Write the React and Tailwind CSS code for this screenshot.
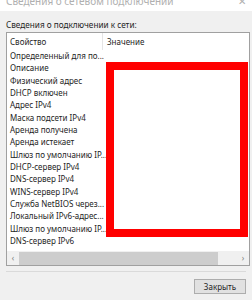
import React from 'react';

const rows = [
  'Определенный для по...',
  'Описание',
  'Физический адрес',
  'DHCP включен',
  'Адрес IPv4',
  'Маска подсети IPv4',
  'Аренда получена',
  'Аренда истекает',
  'Шлюз по умолчанию IP...',
  'DHCP-сервер IPv4',
  'DNS-сервер IPv4',
  'WINS-сервер IPv4',
  'Служба NetBIOS через...',
  'Локальный IPv6-адрес...',
  'Шлюз по умолчанию IP...',
  'DNS-сервер IPv6',
];

export default function App() {
  return (
    <div className="relative w-[252px] h-[300px] overflow-hidden bg-[#f0f0f0] text-[8px] text-[#1e1e1e] font-['Noto_Sans',sans-serif] flex flex-col">
      {/* title bar, cut at the top */}
      <div className="h-[11px] bg-white flex items-start justify-between px-[6px] text-[10px] text-[#b0b0b0] leading-[12px] overflow-hidden">
        <span className="-mt-[5px]">Сведения о сетевом подключении</span>
        <span className="-mt-[5px]">✕</span>
      </div>

      <div className="px-[6px] pt-[8px] flex flex-col flex-1">
        <div className="leading-[12px] h-[13px] text-[8.2px]">Сведения о подключении к сети:</div>

        <div className="w-[244px] h-[234px] bg-white border border-[#a0a0a0] flex flex-col">
          {/* header */}
          <div className="h-[17px] flex leading-[14px]">
            <div className="w-[96px] pl-[3px] pt-[2px] border-r border-[#e5e5e5]">Свойство</div>
            <div className="pl-[4px] pt-[2px]">Значение</div>
          </div>

          <div className="flex flex-col">
            {rows.map((r, i) => (
              <div key={i} className="h-[12.33px] leading-[12px] pl-[3px] whitespace-nowrap">{r}</div>
            ))}
          </div>

          {/* horizontal scrollbar */}
          <div className="mt-auto h-[14px] bg-[#f0f0f0] flex items-center text-[#7a7a7a] text-[8px]">
            <div className="w-[12px] text-center">‹</div>
            <div className="w-[199px] h-[13px] bg-[#cdcdcd]" />
            <div className="flex-1" />
            <div className="w-[12px] text-center">›</div>
          </div>
        </div>

        <div className="mt-[5px] h-px bg-[#dadada]" />

        <div className="flex justify-end mt-[7px]">
          <button className="w-[52px] h-[15px] bg-[#e1e1e1] border border-[#adadad] text-[8px] leading-[13px] text-[#1e1e1e]">Закрыть</button>
        </div>
      </div>

      {/* red highlight frame */}
      <div className="absolute left-[106px] top-[62px] w-[142px] h-[175px] border-[8px] border-[#ff0000]" />
    </div>
  );
}
